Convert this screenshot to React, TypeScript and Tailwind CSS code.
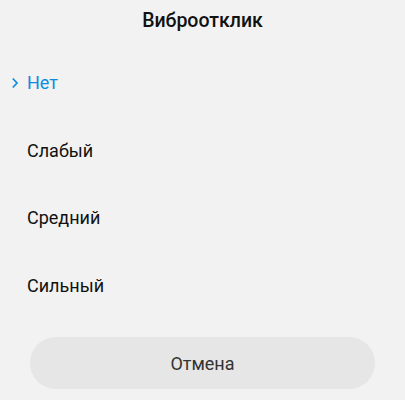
const options = ['Нет', 'Слабый', 'Средний', 'Сильный']

export default function App() {
  const selected = 0

  return (
    <div className="w-[405px] h-[400px] bg-[#f2f2f2] flex flex-col font-['Roboto',sans-serif] overflow-hidden">
      {/* заголовок */}
      <div className="h-[41px] flex items-center justify-center text-[19.5px] font-medium text-[#111111]">
        Виброотклик
      </div>

      {/* варианты */}
      <div className="flex flex-col mt-[8px]">
        {options.map((opt, idx) => (
          <div key={idx} className="h-[67.5px] flex items-center relative pl-[27px]">
            {idx === selected && (
              <svg
                className="absolute left-[11px] top-1/2 -translate-y-1/2"
                width="8"
                height="12"
                viewBox="0 0 8 12"
                fill="none"
              >
                <path d="M1.8 1.5 L6 6 L1.8 10.5" stroke="#0c8ce0" strokeWidth="1.7" />
              </svg>
            )}
            <span
              className={`text-[18px] ${idx === selected ? 'text-[#0c8ce0]' : 'text-[#111111]'}`}
            >
              {opt}
            </span>
          </div>
        ))}
      </div>

      {/* отмена */}
      <div className="px-[30px] mt-[18px]">
        <button className="w-full h-[52px] rounded-full bg-[#e6e6e6] text-[18px] text-[#333333]">
          Отмена
        </button>
      </div>
    </div>
  )
}
